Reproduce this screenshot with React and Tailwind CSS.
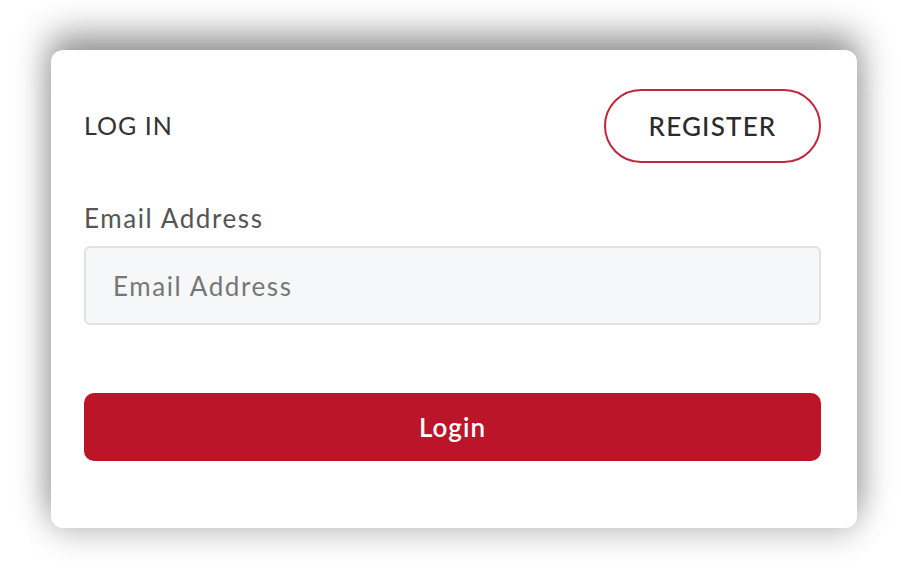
import { useState } from "react";

const App = () => {
    const [email, setEmail] = useState("");

    const submitHandler = (e) => {
        e.preventDefault();
    };

    return (
        <div className="w-[901px] h-[574px] bg-white overflow-hidden pt-[50px] pl-[51px]" style={{ fontFamily: "Lato, 'Open Sans', sans-serif" }}>
            {/* Card */}
            <div className="w-[806px] h-[478px] bg-white rounded-[12px] pl-[33px] pr-[36px] pt-[39px] shadow-[0_-14px_34px_2px_rgba(0,0,0,0.42),0_14px_30px_rgba(0,0,0,0.10)]">
                {/* Header */}
                <div className="flex items-center justify-between">
                    <h2 className="text-[25px] text-[#333] tracking-[1px]">LOG IN</h2>
                    <button className="w-[217px] h-[74px] rounded-full border-2 border-[#c0283a] text-[26px] font-medium text-[#2b2b2b] tracking-[1.2px] bg-white">
                        REGISTER
                    </button>
                </div>

                <form onSubmit={submitHandler}>
                    {/* Email */}
                    <label className="block mt-[38px] text-[26px] leading-[34px] text-[#555] tracking-[1.6px]">
                        Email Address
                    </label>
                    <input
                        type="email"
                        value={email}
                        onChange={(e) => setEmail(e.target.value)}
                        placeholder="Email Address"
                        className="block mt-[11px] w-full h-[79px] rounded-[6px] border-2 border-[#e2e2e2] bg-[#f6f7f9] px-[27px] text-[26px] text-[#333] placeholder:text-[#777] tracking-[1.6px] focus:outline-none"
                    />

                    <button
                        type="submit"
                        className="block mt-[68px] w-full h-[68px] rounded-[10px] bg-[#bc1529] text-white text-[26px] font-semibold tracking-[1px]"
                    >
                        Login
                    </button>
                </form>
            </div>
        </div>
    );
};

export default App;
